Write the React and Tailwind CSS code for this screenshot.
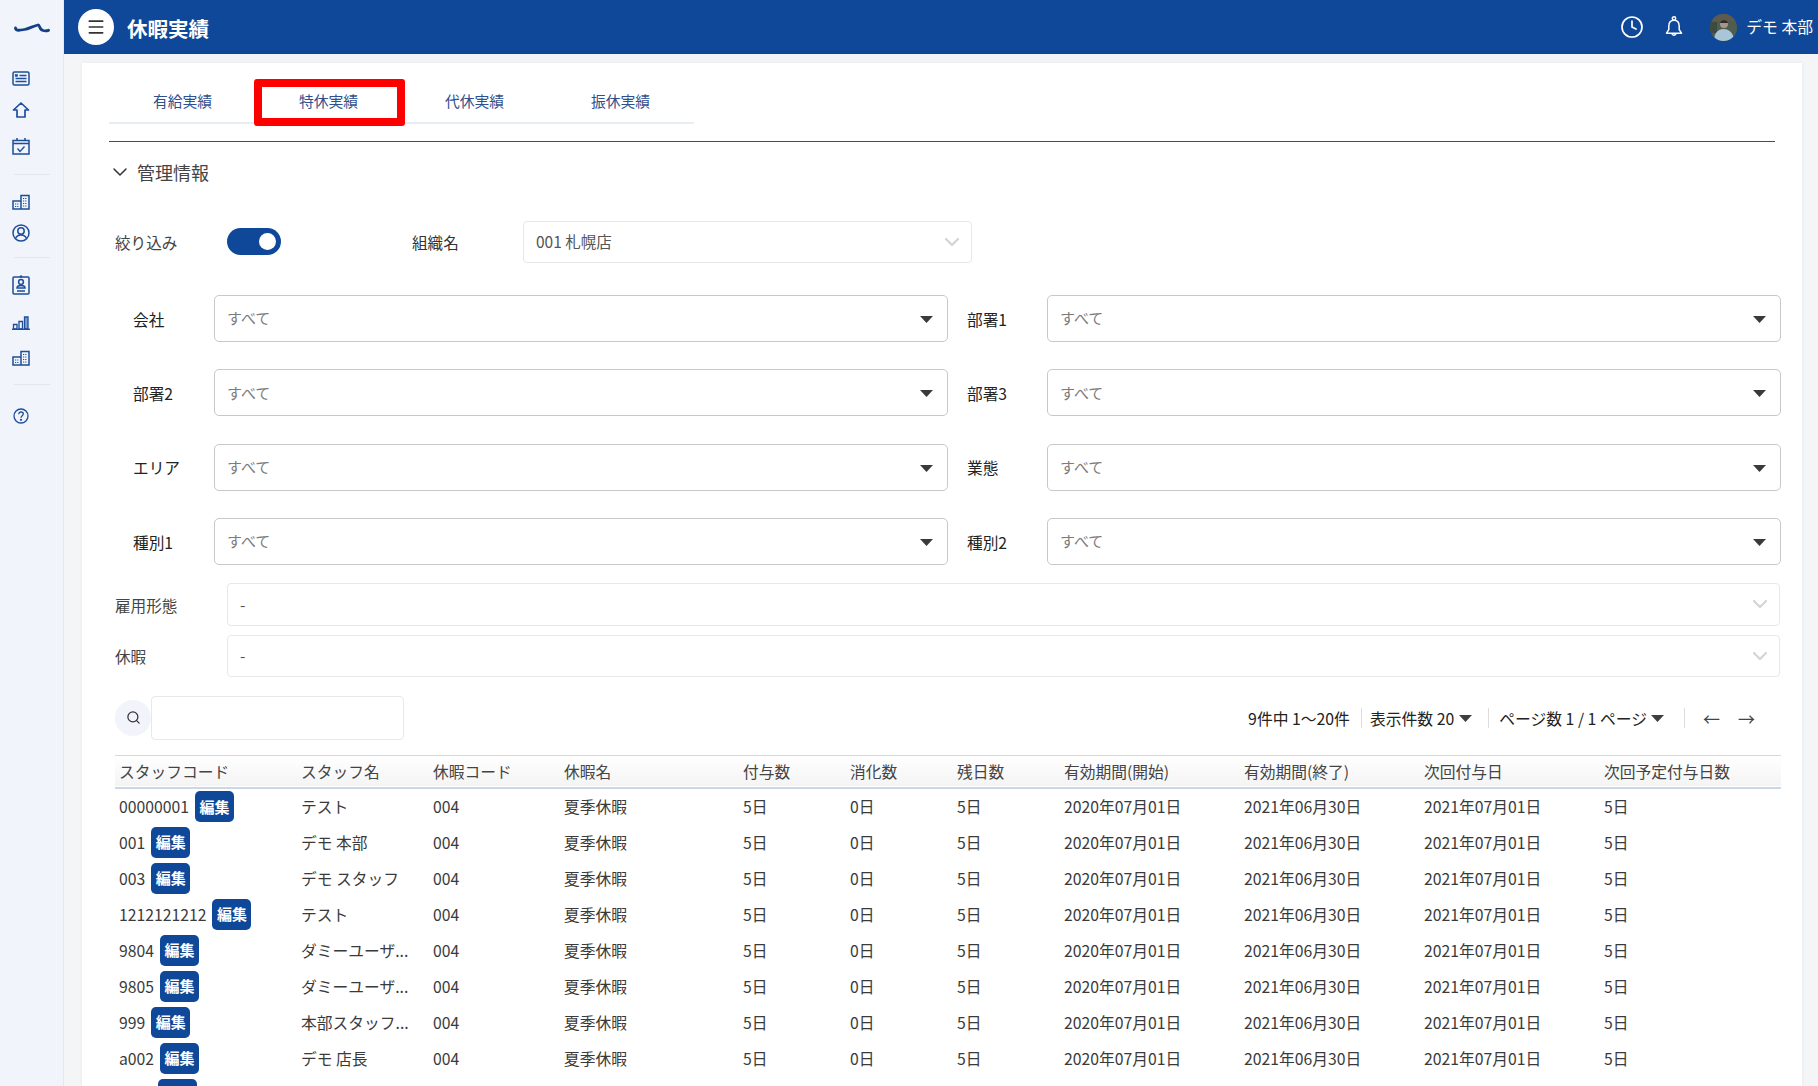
import React from "react";
import { Menu, Clock, ChevronDown, Search } from "lucide-react";

const FONT = "[font-family:'Noto_Sans_CJK_JP','Noto_Sans',sans-serif]";
const BLUE = "#1c4e9c";

const Building = () => (
  <svg width="18" height="16" viewBox="0 0 18 16" fill="none" stroke={BLUE} strokeWidth="1.500">
    <path d="M1 7h8v8H1zM9 1.500h8V15H9z" />
    <path d="M3 10h4M3 12.500h4M11 4.500h4M11 7h4M11 9.500h4M11 12h4" strokeWidth="1.200" strokeDasharray="1.200 1" />
  </svg>
);

const SideIcon = ({ name }) => {
  if (name === "news")
    return (
      <svg width="18" height="15" viewBox="0 0 18 15" fill="none" stroke={BLUE} strokeWidth="1.500">
        <rect x="1" y="1" width="16" height="13" rx="1.500" />
        <path d="M7.500 4.500h7M3.500 7.500h11M3.500 10.500h11" strokeWidth="1.300" />
        <rect x="3.200" y="3.600" width="2.400" height="1.800" fill={BLUE} strokeWidth="0.600" />
      </svg>
    );
  if (name === "home")
    return (
      <svg width="18" height="16" viewBox="0 0 18 16" fill="none" stroke={BLUE} strokeWidth="1.700">
        <path d="M9 1 1.500 8H5v7h8V8h3.500z" strokeLinejoin="round" />
      </svg>
    );
  if (name === "calendar")
    return (
      <svg width="18" height="17" viewBox="0 0 18 17" fill="none" stroke={BLUE} strokeWidth="1.500">
        <rect x="1" y="2.500" width="16" height="13.500" />
        <path d="M1 5.500h16M5 0v3M13 0v3" />
        <path d="m5.500 10.500 2.500 3 4.500-5" strokeWidth="1.300" />
      </svg>
    );
  if (name === "user")
    return (
      <svg width="18" height="18" viewBox="0 0 18 18" fill="none" stroke={BLUE} strokeWidth="1.500">
        <circle cx="9" cy="9" r="8" />
        <circle cx="9" cy="7" r="3.200" />
        <path d="M3.500 14.500c1-2.500 3-3.500 5.500-3.500s4.500 1 5.500 3.500" />
      </svg>
    );
  if (name === "badge")
    return (
      <svg width="18" height="20" viewBox="0 0 18 20" fill="none" stroke={BLUE} strokeWidth="1.500">
        <rect x="1" y="2" width="16" height="17" rx="1" />
        <circle cx="9" cy="1.500" r="1" fill={BLUE} strokeWidth="0.500" />
        <circle cx="9" cy="7" r="2.400" />
        <path d="M5 13c0-2 2-2.500 4-2.500s4 .5 4 2.500zM5 16h8" />
      </svg>
    );
  if (name === "chart")
    return (
      <svg width="18" height="14" viewBox="0 0 18 14" fill="none" stroke={BLUE} strokeWidth="1.300">
        <path d="M1.500 8.500h3.500V13H1.500zM7 5.500h3.500V13H7z" />
        <path d="M12.500 1h3.500v12h-3.500z" fill="#7f9fd0" />
        <path d="M0 13.300h18" strokeWidth="1.400" />
      </svg>
    );
  if (name === "help")
    return (
      <svg width="16" height="16" viewBox="0 0 16 16" fill="none" stroke={BLUE} strokeWidth="1.300">
        <circle cx="8" cy="8" r="7" />
        <path d="M5.800 6.200c0-1.400 1-2.200 2.300-2.200s2.200.9 2.200 2c0 1.700-2.300 1.800-2.300 3.700" />
        <circle cx="8" cy="11.800" r="0.500" />
      </svg>
    );
  return <Building />;
};

const Caret = () => (
  <svg width="13" height="7" viewBox="0 0 13 7" className="shrink-0 mt-[2px]">
    <path d="M0 0h13L6.500 7z" fill="#3a3a3a" />
  </svg>
);

const MiniCaret = () => (
  <svg width="13" height="7" viewBox="0 0 13 7" className="shrink-0">
    <path d="M0 0h13L6.500 7z" fill="#3f3f3f" />
  </svg>
);

const Field = ({ label, pad = "w-[99px] pl-[18px]" }) => (
  <>
    <div className={`${pad} shrink-0 pt-[2px] text-[15.700px] text-[#222]`}>{label}</div>
    <div className="w-[734px] shrink-0 h-[47px] flex items-center justify-between border border-[#c8c8c8] rounded-[5px] pl-[12px] pr-[14px]">
      <span className="text-[15px] text-[#7c7c7c]">すべて</span>
      <Caret />
    </div>
  </>
);

const LightSelect = ({ value, className }) => (
  <div className={`flex items-center justify-between border border-[#e8e8e8] rounded-[4px] pl-[12px] pr-[7px] ${className}`}>
    <span className="text-[15.500px] text-[#555]">{value}</span>
    <ChevronDown size={24} strokeWidth={2.200} color="#d4d4d4" />
  </div>
);

const tabs = ["有給実績", "特休実績", "代休実績", "振休実績"];

const selects = [
  ["会社", "部署1"],
  ["部署2", "部署3"],
  ["エリア", "業態"],
  ["種別1", "種別2"],
];

const headers = [
  "スタッフコード",
  "スタッフ名",
  "休暇コード",
  "休暇名",
  "付与数",
  "消化数",
  "残日数",
  "有効期間(開始)",
  "有効期間(終了)",
  "次回付与日",
  "次回予定付与日数",
];

const rows = [
  ["00000001", "テスト"],
  ["001", "デモ 本部"],
  ["003", "デモ スタッフ"],
  ["1212121212", "テスト"],
  ["9804", "ダミーユーザ..."],
  ["9805", "ダミーユーザ..."],
  ["999", "本部スタッフ..."],
  ["a002", "デモ 店長"],
];

export default function App() {
  return (
    <div className={`${FONT} h-screen w-full flex overflow-hidden bg-[#f4f5f7] text-[#333]`}>
      {/* sidebar */}
      <aside className="w-[64px] shrink-0 bg-[#f1f4fa] border-r border-[#e3e7ee] flex flex-col pl-[12px]">
        <div className="h-[54px] pl-[2px] pt-[2px] flex items-center">
          <svg width="36" height="11" viewBox="0 0 36 11" fill="none" stroke="#123f86" strokeWidth="2.800" strokeLinecap="round" strokeLinejoin="round">
            <path d="M1.500 5c0 3 4 2.500 9 1.500S18 3.500 24 2c2-.5 1 4.500 5 5.500 2 .5 4 .3 5.500-.2" />
          </svg>
        </div>
        <div className="mt-[17px] h-[15px] flex items-center"><SideIcon name="news" /></div>
        <div className="mt-[16px] h-[16px] flex items-center"><SideIcon name="home" /></div>
        <div className="mt-[20px] h-[17px] flex items-center"><SideIcon name="calendar" /></div>
        <div className="mt-[19px] ml-[2px] w-[36px] h-px bg-[#e3e6ec]" />
        <div className="mt-[19px] h-[16px] flex items-center"><SideIcon name="building" /></div>
        <div className="mt-[14px] h-[18px] flex items-center"><SideIcon name="user" /></div>
        <div className="mt-[15px] ml-[2px] w-[36px] h-px bg-[#e3e6ec]" />
        <div className="mt-[17px] h-[20px] flex items-center"><SideIcon name="badge" /></div>
        <div className="mt-[21px] h-[14px] flex items-center"><SideIcon name="chart" /></div>
        <div className="mt-[20px] h-[16px] flex items-center"><SideIcon name="building" /></div>
        <div className="mt-[18px] ml-[2px] w-[36px] h-px bg-[#e3e6ec]" />
        <div className="mt-[23px] ml-[1px] h-[16px] flex items-center"><SideIcon name="help" /></div>
      </aside>

      <div className="flex-1 flex flex-col min-w-0">
        {/* header */}
        <header className="h-[54px] shrink-0 bg-[#0f4898] flex items-center pl-[14px] pr-[5px] text-white">
          <div className="w-[36px] h-[36px] rounded-full bg-white flex items-center justify-center">
            <Menu size={20} color="#333" strokeWidth={2} />
          </div>
          <h1 className="ml-[13px] pt-[2px] text-[20.500px] font-bold">休暇実績</h1>
          <div className="ml-auto flex items-center">
            <Clock size={24} strokeWidth={1.700} />
            <svg width="18" height="22" viewBox="0 0 18 22" fill="none" stroke="white" strokeWidth="1.500" className="ml-[21px]">
              <circle cx="9" cy="2.500" r="1.700" />
              <path d="M9 4.200c-3.500 0-5.200 2.600-5.200 6v3.500L1.500 17.200h15l-2.300-3.500v-3.500c0-3.400-1.700-6-5.200-6z" strokeLinejoin="round" />
              <path d="M6.800 17.500a2.300 2.300 0 0 0 4.400 0" />
            </svg>
            <div className="ml-[27px] w-[27px] h-[27px] rounded-full overflow-hidden bg-[#4d5a52]">
              <svg width="27" height="27" viewBox="0 0 27 27">
                <rect width="27" height="27" fill="#4f5d50" />
                <rect width="27" height="7" fill="#5e5a4e" />
                <rect y="8" width="7" height="11" fill="#3c4a40" />
                <path d="M4 27c0-8 4-12 9.500-12S24 19 24 27z" fill="#a8c6d8" />
                <circle cx="14" cy="10" r="4" fill="#a8968a" />
                <path d="M10 9c0-4 8-4 8 0z" fill="#2f2c2a" />
              </svg>
            </div>
            <span className="ml-[9px] text-[15.800px]">デモ 本部</span>
          </div>
        </header>

        {/* main */}
        <main className="flex-1 min-h-0 pl-[18px] pr-[16px] pt-[9px]">
          <div className="relative bg-white h-full px-[27px] pt-[16px] shadow-[0_0_4px_rgba(0,0,0,0.06)]">
            <div className="flex w-[585px] h-[45px] border-b-2 border-[#e9edf5]">
              {tabs.map((t) => (
                <div key={t} className="w-[146px] h-[43px] pt-[1px] pl-[1px] flex items-center justify-center text-[14.800px] text-[#2f4f8f]">
                  {t}
                </div>
              ))}
            </div>
            <div className="absolute left-[172px] top-[16px] w-[151px] h-[47px] border-[8px] border-[#ff0000] rounded-[3px]" />
            <div className="mt-[17px] h-px bg-[#245099]" />

            <div className="mt-[15px] h-[30px] flex items-center -ml-[1px]">
              <ChevronDown size={24} strokeWidth={1.500} color="#333" />
              <span className="ml-[5px] text-[18px] text-[#444]">管理情報</span>
            </div>

            <div className="ml-[6px] -mr-[5px]">
              {/* narrowing row */}
              <div className="mt-[34px] h-[42px] flex items-center">
                <span className="w-[112px] pt-[1px] text-[15.600px] text-[#444]">絞り込み</span>
                <div className="w-[54px] h-[27px] -mt-[2px] rounded-full bg-[#0f4898] flex items-center justify-end pr-[5px]">
                  <div className="w-[17px] h-[17px] rounded-full bg-white" />
                </div>
                <span className="ml-[131px] w-[111px] pt-[1px] text-[15.600px] text-[#333]">組織名</span>
                <LightSelect value="001 札幌店" className="w-[449px] h-[42px]" />
              </div>

              <div className="mt-[32px] flex flex-col gap-[27.300px]">
                {selects.map(([a, b]) => (
                  <div key={a} className="flex items-center">
                    <Field label={a} />
                    <Field label={b} pad="w-[99px] pl-[19px]" />
                  </div>
                ))}
              </div>

              <div className="mt-[18px] h-[43px] flex items-center">
                <span className="w-[112px] pt-[2px] text-[15.600px] text-[#444]">雇用形態</span>
                <LightSelect value="-" className="flex-1 h-[43px]" />
              </div>
              <div className="mt-[9px] h-[42px] flex items-center">
                <span className="w-[112px] pt-[2px] text-[15.600px] text-[#444]">休暇</span>
                <LightSelect value="-" className="flex-1 h-[42px]" />
              </div>

              {/* search and pager */}
              <div className="mt-[19px] h-[44px] flex items-center">
                <div className="w-[36px] h-[36px] rounded-full bg-[#f1f4fa] flex items-center justify-center">
                  <Search size={15} color="#333" strokeWidth={2} />
                </div>
                <div className="w-[253px] h-[44px] border border-[#e8e8e8] rounded-[4px]" />
                <div className="ml-auto pt-[1px] flex items-center text-[15.800px] text-[#222] pr-[25px]">
                  <span>9件中 1〜20件</span>
                  <span className="ml-[11px] mr-[8px] w-px h-[20px] bg-[#dcdcdc]" />
                  <span className="mr-[5px]">表示件数 20</span>
                  <MiniCaret />
                  <span className="ml-[16px] mr-[10px] w-px h-[20px] bg-[#dcdcdc]" />
                  <span className="mr-[4px]">ページ数 1 / 1 ページ</span>
                  <MiniCaret />
                  <span className="ml-[20px] mr-[18px] w-px h-[20px] bg-[#dcdcdc]" />
                  <span className="text-[#444] text-[17px]">←</span>
                  <span className="ml-[18px] text-[#444] text-[17px]">→</span>
                </div>
              </div>

              {/* table */}
              <table className="mt-[15px] w-full table-fixed border-collapse text-[15.750px]">
                <colgroup>
                  <col className="w-[182px]" />
                  <col className="w-[132px]" />
                  <col className="w-[131px]" />
                  <col className="w-[179px]" />
                  <col className="w-[107px]" />
                  <col className="w-[107px]" />
                  <col className="w-[107px]" />
                  <col className="w-[180px]" />
                  <col className="w-[180px]" />
                  <col className="w-[180px]" />
                  <col className="w-[181px]" />
                </colgroup>
                <thead>
                  <tr className="h-[33px] bg-gradient-to-b from-white to-[#f4f4f4] border-t border-[#d6d6e2] border-b-2 border-b-[#c9d7e8]">
                    {headers.map((h) => (
                      <th key={h} className="px-[4px] text-left font-normal text-[#444] whitespace-nowrap">
                        {h}
                      </th>
                    ))}
                  </tr>
                </thead>
                <tbody>
                  {rows.map(([code, name]) => (
                    <tr key={code} className="h-[36px] text-[#3a3a3a]">
                      <td className="px-[4px] whitespace-nowrap">
                        <div className="flex items-center gap-[6px]">
                          <span>{code}</span>
                          <span className="w-[39px] h-[31px] rounded-[5px] bg-[#0f4898] text-white font-bold text-[15px] flex items-center justify-center">
                            編集
                          </span>
                        </div>
                      </td>
                      <td className="px-[4px] whitespace-nowrap">{name}</td>
                      <td className="px-[4px]">004</td>
                      <td className="px-[4px]">夏季休暇</td>
                      <td className="px-[4px]">5日</td>
                      <td className="px-[4px]">0日</td>
                      <td className="px-[4px]">5日</td>
                      <td className="px-[4px] whitespace-nowrap">2020年07月01日</td>
                      <td className="px-[4px] whitespace-nowrap">2021年06月30日</td>
                      <td className="px-[4px] whitespace-nowrap">2021年07月01日</td>
                      <td className="px-[4px]">5日</td>
                    </tr>
                  ))}
                  {/* next row is only just visible at the fold: its button starts at the bottom edge */}
                  <tr className="h-[36px]">
                    <td className="px-[4px]">
                      <div className="flex items-center">
                        <div className="ml-[39px] w-[39px] h-[31px] rounded-[5px] bg-[#0f4898]" />
                      </div>
                    </td>
                  </tr>
                </tbody>
              </table>
            </div>
          </div>
        </main>
      </div>
    </div>
  );
}
